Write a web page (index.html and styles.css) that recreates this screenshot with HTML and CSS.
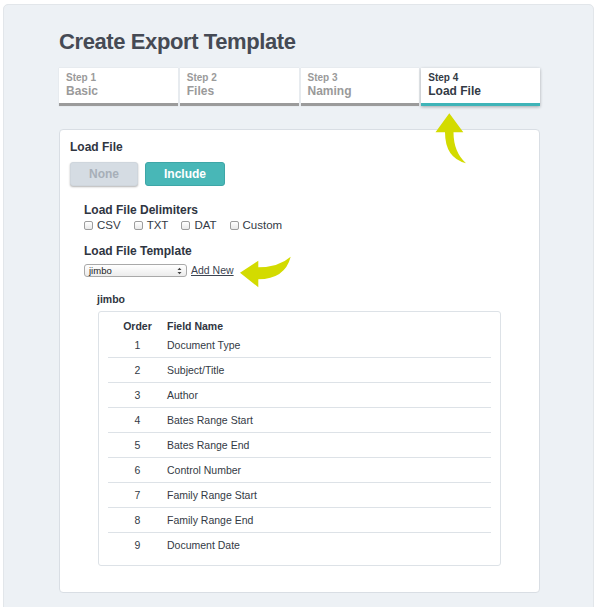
FILE: index.html
```html
<!DOCTYPE html>
<html lang="en">
<head>
    <meta charset="UTF-8">
    <meta name="viewport" content="width=device-width, initial-scale=1.0">
    <title>Create Export Template</title>
    <link rel="stylesheet" href="styles.css">
</head>
<body>

<div class="panel">
    <h1 class="title">Create Export Template</h1>

    <div class="steps">
        <div class="step"><span class="step-num">Step 1</span><span class="step-name">Basic</span></div>
        <div class="step"><span class="step-num">Step 2</span><span class="step-name">Files</span></div>
        <div class="step"><span class="step-num">Step 3</span><span class="step-name">Naming</span></div>
        <div class="step step-active"><span class="step-num">Step 4</span><span class="step-name">Load File</span></div>
    </div>

    <div class="card">
        <div class="section-title">Load File</div>
        <div class="toggle">
            <button type="button" class="btn btn-off">None</button>
            <button type="button" class="btn btn-on">Include</button>
        </div>

        <div class="options">
            <div class="sub-title">Load File Delimiters</div>
            <div class="checks">
                <label class="check"><input type="checkbox">CSV</label>
                <label class="check"><input type="checkbox">TXT</label>
                <label class="check"><input type="checkbox">DAT</label>
                <label class="check"><input type="checkbox">Custom</label>
            </div>

            <div class="sub-title sub-title-gap">Load File Template</div>
            <div class="template-row">
                <div class="select">
                    <span>jimbo</span>
                    <svg width="5" height="8" viewBox="0 0 5 8">
                        <path d="M0.5 3 L2.5 0.8 L4.5 3 Z M0.5 5 L2.5 7.2 L4.5 5 Z" fill="#444"/>
                    </svg>
                </div>
                <a href="#" class="add-link">Add New</a>
            </div>
        </div>

        <div class="template">
            <div class="template-name">jimbo</div>
            <div class="fields">
                <div class="field-head"><span class="col-order">Order</span><span>Field Name</span></div>
                <div class="field-row"><span class="col-order">1</span><span>Document Type</span></div>
                <div class="field-row"><span class="col-order">2</span><span>Subject/Title</span></div>
                <div class="field-row"><span class="col-order">3</span><span>Author</span></div>
                <div class="field-row"><span class="col-order">4</span><span>Bates Range Start</span></div>
                <div class="field-row"><span class="col-order">5</span><span>Bates Range End</span></div>
                <div class="field-row"><span class="col-order">6</span><span>Control Number</span></div>
                <div class="field-row"><span class="col-order">7</span><span>Family Range Start</span></div>
                <div class="field-row"><span class="col-order">8</span><span>Family Range End</span></div>
                <div class="field-row"><span class="col-order">9</span><span>Document Date</span></div>
            </div>
        </div>
    </div>

    <!-- callout arrows -->
    <svg class="arrow arrow-up" width="40" height="56" viewBox="0 0 40 56">
        <path d="M19.3 3.3 L33.3 22.3 L23.5 22.3 Q23.5 42 36 53.3 Q15 48 15 22.3 L5.5 22.3 Z" fill="#d3db00"/>
    </svg>
    <svg class="arrow arrow-left" width="56" height="38" viewBox="0 0 56 38">
        <path d="M2 20.7 L20.3 8.7 L20.3 15.3 Q41 15 52.7 4.7 Q47 27 20.3 27.3 L20.3 35.3 Z" fill="#d3db00"/>
    </svg>
</div>

</body>
</html>
```

FILE: styles.css
```css
body {
    margin: 0;
    background-color: #fff;
    font-family: "Liberation Sans", Arial, sans-serif;
    color: #333a45;
}

.panel {
    position: relative;
    box-sizing: border-box;
    width: 591px;
    margin: 4px 0 0 3px;
    padding: 24px 53px 30px 55px;
    background-color: #edf1f5;
    border: 1px solid #e2e6ea;
    border-radius: 5px;
}

.title {
    margin: 0 0 13px 0;
    font-size: 22px;
    line-height: 26px;
    letter-spacing: -0.4px;
    font-weight: bold;
    color: #454a54;
}

/* wizard steps */
.steps {
    display: grid;
    grid-template-columns: repeat(4, 1fr);
    gap: 2px;
}

.step {
    display: flex;
    flex-direction: column;
    padding: 3px 7px 4px 7px;
    background-color: #fff;
    border-bottom: 3px solid #9b9b9b;
    box-shadow: 0 0 1px rgba(0, 0, 0, 0.15);
    color: #9a9a9a;
    font-weight: bold;
}

.step-num {
    font-size: 10px;
    line-height: 13px;
}

.step-name {
    font-size: 12px;
    line-height: 15px;
}

.step-active {
    color: #333a45;
    border-bottom-color: #3fb4b8;
    box-shadow: 0 1px 3px rgba(0, 0, 0, 0.3);
}

/* card */
.card {
    margin-top: 23px;
    padding: 10px 10px 26px 10px;
    background-color: #fff;
    border: 1px solid #d9dee4;
    border-radius: 4px;
}

.section-title,
.sub-title {
    font-size: 12px;
    line-height: 15px;
    font-weight: bold;
    color: #2f3541;
}

.toggle {
    display: flex;
    gap: 7px;
    margin-top: 7px;
}

.btn {
    box-sizing: border-box;
    height: 24px;
    padding: 0 18px;
    border-radius: 3px;
    font-family: "Liberation Sans", Arial, sans-serif;
    font-size: 12px;
    font-weight: bold;
    cursor: pointer;
}

.btn-off {
    width: 68px;
    background-color: #d5dce3;
    border: 1px solid #cfd6dd;
    color: #a7afb8;
    box-shadow: 0 1px 2px rgba(0, 0, 0, 0.3);
}

.btn-on {
    width: 80px;
    background-color: #48b7b7;
    border: 1px solid #3ea6a7;
    color: #fff;
}

.options {
    margin: 17px 0 0 14px;
}

.sub-title-gap {
    margin-top: 12px;
}

.checks {
    display: flex;
    font-size: 11.5px;
    line-height: 14px;
}

.check {
    display: flex;
    align-items: center;
    margin-right: 13px;
    color: #333a45;
}

.check input {
    appearance: none;
    -webkit-appearance: none;
    box-sizing: border-box;
    width: 9px;
    height: 9px;
    margin: 1px 4px 0 0;
    border: 1px solid #9d9d9d;
    border-radius: 2px;
    background: linear-gradient(#fff, #e9e9e9);
}

.template-row {
    display: flex;
    align-items: center;
    gap: 4px;
    margin-top: 5px;
}

.select {
    box-sizing: border-box;
    display: flex;
    align-items: center;
    justify-content: space-between;
    width: 103px;
    height: 13px;
    padding: 0 4px 0 4px;
    border: 1px solid #a9a9a9;
    border-radius: 3px;
    background: linear-gradient(#fff, #ececec);
    font-size: 9.5px;
    color: #222;
}

.add-link {
    font-size: 10.5px;
    line-height: 13px;
    color: #3b4350;
}

/* field list */
.template {
    margin: 16px 28px 0 28px;
}

.template-name {
    margin-left: -1px;
    font-size: 10.5px;
    line-height: 13px;
    font-weight: bold;
    color: #2f3541;
}

.fields {
    margin-top: 5px;
    padding: 8px 9px 8px 9px;
    border: 1px solid #dde2e7;
    border-radius: 3px;
    font-size: 10.5px;
}

.field-head {
    display: flex;
    line-height: 13px;
    font-weight: bold;
    color: #2f3541;
}

.field-row {
    display: flex;
    line-height: 24px;
    border-bottom: 1px solid #dde2e7;
    color: #333a45;
}

.field-row:last-child {
    border-bottom: none;
}

.col-order {
    width: 59px;
    text-align: center;
}

.arrow {
    position: absolute;
}

.arrow-up {
    left: 426px;
    top: 105px;
}

.arrow-left {
    left: 234px;
    top: 247px;
}
```
